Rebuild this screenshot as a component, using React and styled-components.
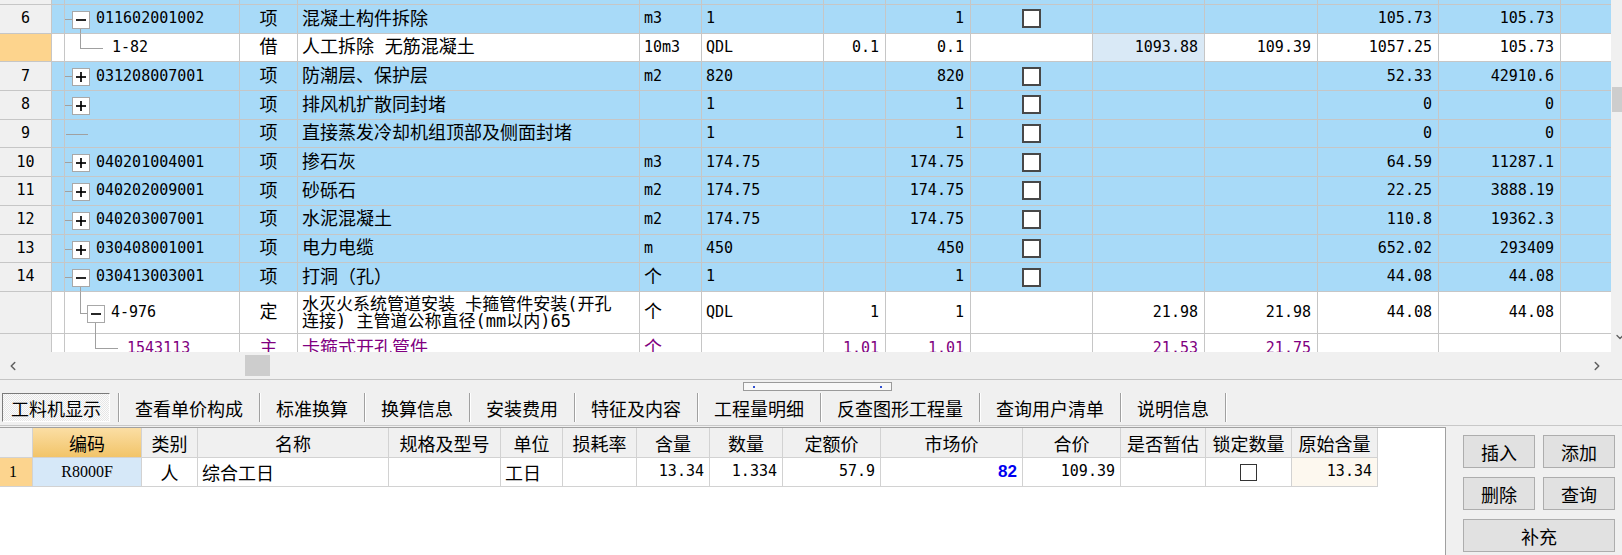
import React from "react"
import styled, { createGlobalStyle, css } from "styled-components"
import { ChevronLeft, ChevronRight, ChevronDown } from "lucide-react"

const CJK = `"DejaVu Sans Mono", "Noto Sans CJK SC", sans-serif`
const SANS = `"Noto Sans CJK SC", sans-serif`
const MONO = `"DejaVu Sans Mono", "Liberation Mono", monospace`
const LINE = "#c6c6c6"
const BLUE = "#a8daf8"

const GlobalStyle = createGlobalStyle`
  html, body {
    margin: 0;
    padding: 0;
  }
  body {
    width: 1622px;
    height: 555px;
    overflow: hidden;
    background: #f0f0f0;
    font-family: ${SANS};
    color: #000;
  }
`

const Screen = styled.div`
  width: 1622px;
  height: 555px;
  display: flex;
  flex-direction: column;
  background: #f0f0f0;
`

/* ---------- upper grid ---------- */

const GridArea = styled.div`
  display: flex;
  height: 352px;
`

const GridBody = styled.div`
  width: 1611px;
  height: 352px;
  overflow: hidden;
  background: #fff;
`

const Row = styled.div`
  display: flex;
  height: ${p => p.$h}px;
  background: ${p => (p.$white ? "#fff" : BLUE)};
  color: ${p => (p.$purple ? "#800080" : "#000")};
`

const Cell = styled.div`
  box-sizing: border-box;
  flex: 0 0 ${p => p.$w}px;
  height: 100%;
  display: flex;
  align-items: center;
  justify-content: ${p =>
    p.$align === "right" ? "flex-end" : p.$align === "center" ? "center" : "flex-start"};
  padding-left: ${p => (p.$align === "left" ? "4px" : "0")};
  padding-right: ${p => (p.$align === "right" ? "6px" : "0")};
  border-right: ${p => (p.$last ? "none" : `1px solid ${LINE}`)};
  border-bottom: 1px solid ${LINE};
  background: ${p => p.$bg || "transparent"};
  white-space: nowrap;
`

const Txt = styled.span`
  font-family: ${p => (p.$mono ? MONO : CJK)};
  font-size: ${p => (p.$mono ? "15px" : p.$tight ? "17px" : "18px")};
  line-height: ${p => (p.$tight ? "17px" : "1.15")};
`

const TreeSvg = styled.svg`
  flex: 0 0 auto;
  overflow: visible;
`

const Check = styled.span`
  display: block;
  box-sizing: border-box;
  width: ${p => (p.$small ? "17px" : "19px")};
  height: ${p => (p.$small ? "17px" : "19px")};
  border: ${p => (p.$small ? "1px solid #333" : "2px solid #484848")};
  background: #fff;
`

const VScroll = styled.div`
  width: 11px;
  height: 352px;
  overflow: hidden;
  background: #f0f0f0;
`

const VTrack = styled.div`
  width: 17px;
  height: 100%;
  box-sizing: border-box;
  padding: 87px 0 9px;
  display: flex;
  flex-direction: column;
  align-items: center;
`

const VThumb = styled.div`
  width: 15px;
  height: 25px;
  background: #cdcdcd;
`

const Spacer = styled.div`
  flex: 1;
`

const HScroll = styled.div`
  height: 28px;
  box-sizing: border-box;
  border-bottom: 1px solid #c4c4c4;
  display: flex;
  align-items: center;
  padding-right: 12px;
  background: #f0f0f0;
`

const ArrowBox = styled.div`
  width: 26px;
  height: 27px;
  display: flex;
  align-items: center;
  justify-content: center;
  color: #606060;
`

const HThumb = styled.div`
  margin-left: 219px;
  width: 25px;
  height: 21px;
  background: #cdcdcd;
`

/* ---------- splitter + tabs ---------- */

const Splitter = styled.div`
  height: 12px;
  display: flex;
  align-items: flex-start;
`

const Handle = styled.div`
  margin: 2px 0 0 743px;
  width: 149px;
  height: 9px;
  box-sizing: border-box;
  border: 1px solid #9a9a9a;
  background: #f8f8f8;
  display: flex;
  align-items: center;
  justify-content: space-between;
  padding: 0 9px;
`

const Dot = styled.span`
  width: 2px;
  height: 2px;
  background: #2f4fd0;
`

const TabBar = styled.div`
  height: 34px;
  box-sizing: border-box;
  padding-top: 1px;
  border-bottom: 1px solid #c8c8c8;
  display: flex;
  align-items: flex-start;
`

const Tab = styled.div`
  height: 29px;
  display: flex;
  align-items: center;
  padding: ${p => (p.$active ? "0 8px 0 2px" : "0 16px")};
  border-right: 1px solid #a0a0a0;
  box-shadow: 1px 0 0 #fff;
  font-family: ${SANS};
  font-size: 18px;
  white-space: nowrap;
`

const TabLabel = styled.span`
  ${p =>
    p.$active &&
    css`
      height: 29px;
      box-sizing: border-box;
      display: flex;
      align-items: center;
      padding: 0 8px;
      border: 1px solid;
      border-color: #7a7a7a #fff #fff #7a7a7a;
      background: repeating-conic-gradient(#e6e6e6 0 25%, #fcfcfc 0 50%) 0 0 / 2px 2px;
    `}
`

/* ---------- lower panel ---------- */

const Bottom = styled.div`
  margin-top: 1px;
  flex: 1;
  display: flex;
`

const DetailPanel = styled.div`
  width: 1446px;
  box-sizing: border-box;
  border-top: 1px solid #a0a0a0;
  border-right: 1px solid #a0a0a0;
  background: #fff;
`

const DRow = styled.div`
  display: flex;
  height: ${p => (p.$head ? 30 : 29)}px;
`

const DCell = styled.div`
  box-sizing: border-box;
  flex: 0 0 ${p => p.$w}px;
  display: flex;
  align-items: center;
  justify-content: ${p =>
    p.$align === "right" ? "flex-end" : p.$align === "left" ? "flex-start" : "center"};
  padding-left: ${p => (p.$align === "left" ? "4px" : "0")};
  padding-right: ${p => (p.$align === "right" ? "5px" : "0")};
  border-right: 1px solid #d2d2d2;
  border-bottom: 1px solid #d2d2d2;
  background: ${p => p.$bg || "transparent"};
  font-family: ${SANS};
  font-size: 18px;
  white-space: nowrap;
`

const SerifTxt = styled.span`
  font-family: "Liberation Serif", serif;
  font-size: 16px;
  padding-left: ${p => (p.$indent ? "5px" : "0")};
`

const Market = styled.span`
  font-family: "Liberation Sans", sans-serif;
  font-weight: bold;
  font-size: 17px;
  color: #0000f0;
`

const ActionPanel = styled.div`
  flex: 1;
  display: grid;
  grid-template-columns: 72px 72px;
  grid-auto-rows: 33px;
  column-gap: 8px;
  row-gap: 9px;
  align-content: start;
  padding: 8px 0 0 17px;
`

const Button = styled.button`
  grid-column: ${p => (p.$wide ? "span 2" : "auto")};
  margin: 0;
  padding: 0;
  border: 1px solid #adadad;
  background: #e1e1e1;
  font-family: ${SANS};
  font-size: 18px;
  color: #000;
`

/* ---------- data ---------- */

const rows = [
  { h: 5 },
  { num: "6", tree: { level: 0, box: "-", down: true }, code: "011602001002", type: "项", name: "混凝土构件拆除", unit: "m3", expr: "1", q2: "1", check: true, c: "105.73", d: "105.73" },
  { white: true, sel: true, tree: { level: 1, up: true }, code: "1-82", type: "借", name: "人工拆除 无筋混凝土", unit: "10m3", expr: "QDL", q1: "0.1", q2: "0.1", a: "1093.88", aHi: true, b: "109.39", c: "1057.25", d: "105.73" },
  { num: "7", tree: { level: 0, box: "+" }, code: "031208007001", type: "项", name: "防潮层、保护层", unit: "m2", expr: "820", q2: "820", check: true, c: "52.33", d: "42910.6" },
  { num: "8", tree: { level: 0, box: "+" }, type: "项", name: "排风机扩散同封堵", expr: "1", q2: "1", check: true, c: "0", d: "0" },
  { num: "9", tree: { level: 0 }, type: "项", name: "直接蒸发冷却机组顶部及侧面封堵", expr: "1", q2: "1", check: true, c: "0", d: "0" },
  { num: "10", tree: { level: 0, box: "+" }, code: "040201004001", type: "项", name: "掺石灰", unit: "m3", expr: "174.75", q2: "174.75", check: true, c: "64.59", d: "11287.1" },
  { num: "11", tree: { level: 0, box: "+" }, code: "040202009001", type: "项", name: "砂砾石", unit: "m2", expr: "174.75", q2: "174.75", check: true, c: "22.25", d: "3888.19" },
  { num: "12", tree: { level: 0, box: "+" }, code: "040203007001", type: "项", name: "水泥混凝土", unit: "m2", expr: "174.75", q2: "174.75", check: true, c: "110.8", d: "19362.3" },
  { num: "13", tree: { level: 0, box: "+" }, code: "030408001001", type: "项", name: "电力电缆", unit: "m", expr: "450", q2: "450", check: true, c: "652.02", d: "293409" },
  { num: "14", tree: { level: 0, box: "-", down: true }, code: "030413003001", type: "项", name: "打洞（孔）", unit: "个", expr: "1", q2: "1", check: true, c: "44.08", d: "44.08" },
  { h: 42.6, white: true, tree: { level: 1, box: "-", up: true, down: true }, code: "4-976", type: "定", name: ["水灭火系统管道安装 卡箍管件安装(开孔", "连接) 主管道公称直径(mm以内)65"], unit: "个", expr: "QDL", q1: "1", q2: "1", a: "21.98", b: "21.98", c: "44.08", d: "44.08" },
  { white: true, purple: true, tree: { level: 2, up: true }, code: "1543113", type: "主", name: "卡箍式开孔管件", unit: "个", q1: "1.01", q2: "1.01", a: "21.53", b: "21.75" }
]

const tabs = ["工料机显示", "查看单价构成", "标准换算", "换算信息", "安装费用", "特征及内容", "工程量明细", "反查图形工程量", "查询用户清单", "说明信息"]

const detailCols = [
  { w: 33, label: "" },
  { w: 109, label: "编码", hot: true },
  { w: 56, label: "类别" },
  { w: 191, label: "名称" },
  { w: 112, label: "规格及型号" },
  { w: 62, label: "单位" },
  { w: 74, label: "损耗率" },
  { w: 73, label: "含量" },
  { w: 73, label: "数量" },
  { w: 98, label: "定额价" },
  { w: 142, label: "市场价" },
  { w: 98, label: "合价" },
  { w: 85, label: "是否暂估" },
  { w: 86, label: "锁定数量" },
  { w: 86, label: "原始含量" }
]

const isAscii = s => /^[\x00-\x7f]*$/.test(s)

function Value({ text }) {
  if (!text) return null
  return <Txt $mono={isAscii(text)}>{text}</Txt>
}

function TreeGlyph({ level = 0, box, up, down, h }) {
  const ch = h - 1
  const mid = Math.round(ch / 2)
  const px = 15 * level
  const bx = 7 + 15 * level
  const width = box ? bx + 24 : px + 32
  const y = mid + 0.5
  const stroke = "#a0a0a0"
  return (
    <TreeSvg width={width} height={ch}>
      {up && <line x1={px + 0.5} y1={0} x2={px + 0.5} y2={y} stroke={stroke} />}
      {box ? (
        <>
          <line x1={level ? px : 0} y1={y} x2={bx} y2={y} stroke={stroke} />
          <rect x={bx + 0.5} y={mid - 8 + 0.5} width={17} height={17} fill="#fff" stroke="#a8a8a8" />
          <line x1={bx + 4} y1={y + 0.5} x2={bx + 14} y2={y + 0.5} stroke="#000" strokeWidth="1.7" />
          {box === "+" && <line x1={bx + 9} y1={mid - 4} x2={bx + 9} y2={mid + 6} stroke="#000" strokeWidth="1.7" />}
          {down && <line x1={bx + 8.5} y1={mid + 10} x2={bx + 8.5} y2={h} stroke={stroke} />}
        </>
      ) : (
        <line x1={level ? px : 1} y1={y} x2={px + 23} y2={y} stroke={stroke} />
      )}
    </TreeSvg>
  )
}

function GridRow({ r }) {
  const h = r.h || 28.7
  const names = Array.isArray(r.name) ? r.name : null
  return (
    <Row $h={h} $white={r.white} $purple={r.purple}>
      <Cell $w={52} $align="center" $bg={r.sel ? "#fdd48d" : "#f0f0f0"}>
        {r.num && <Txt $mono>{r.num}</Txt>}
      </Cell>
      <Cell $w={13} />
      <Cell $w={175}>
        {r.tree && <TreeGlyph {...r.tree} h={h} />}
        {r.code && <Txt $mono>{r.code}</Txt>}
      </Cell>
      <Cell $w={58} $align="center"><Value text={r.type} /></Cell>
      <Cell $w={342} $align="left">
        {names ? (
          <Txt $tight>{names[0]}<br />{names[1]}</Txt>
        ) : (
          r.name && <Txt>{r.name}</Txt>
        )}
      </Cell>
      <Cell $w={62} $align="left"><Value text={r.unit} /></Cell>
      <Cell $w={122} $align="left"><Value text={r.expr} /></Cell>
      <Cell $w={62} $align="right"><Value text={r.q1} /></Cell>
      <Cell $w={85} $align="right"><Value text={r.q2} /></Cell>
      <Cell $w={122} $align="center">{r.check && <Check />}</Cell>
      <Cell $w={112} $align="right" $bg={r.aHi ? "#d9e9f6" : null}><Value text={r.a} /></Cell>
      <Cell $w={113} $align="right"><Value text={r.b} /></Cell>
      <Cell $w={121} $align="right"><Value text={r.c} /></Cell>
      <Cell $w={122} $align="right"><Value text={r.d} /></Cell>
      <Cell $w={50} $last />
    </Row>
  )
}

function DetailGrid() {
  const w = i => detailCols[i].w
  return (
    <DetailPanel>
      <DRow $head>
        {detailCols.map((c, i) => (
          <DCell
            key={i}
            $w={c.w}
            $bg={c.hot ? "linear-gradient(#fbdea4, #f2c469)" : "#f0f0f0"}
          >
            {c.label}
          </DCell>
        ))}
      </DRow>
      <DRow>
        <DCell $w={w(0)} $align="left" $bg="#fcd48e"><SerifTxt $indent>1</SerifTxt></DCell>
        <DCell $w={w(1)} $bg="#d6e8f8"><SerifTxt>R8000F</SerifTxt></DCell>
        <DCell $w={w(2)}>人</DCell>
        <DCell $w={w(3)} $align="left">综合工日</DCell>
        <DCell $w={w(4)} />
        <DCell $w={w(5)} $align="left">工日</DCell>
        <DCell $w={w(6)} />
        <DCell $w={w(7)} $align="right"><Txt $mono>13.34</Txt></DCell>
        <DCell $w={w(8)} $align="right"><Txt $mono>1.334</Txt></DCell>
        <DCell $w={w(9)} $align="right"><Txt $mono>57.9</Txt></DCell>
        <DCell $w={w(10)} $align="right"><Market>82</Market></DCell>
        <DCell $w={w(11)} $align="right"><Txt $mono>109.39</Txt></DCell>
        <DCell $w={w(12)} />
        <DCell $w={w(13)}><Check $small /></DCell>
        <DCell $w={w(14)} $align="right" $bg="#fdf8ef"><Txt $mono>13.34</Txt></DCell>
      </DRow>
    </DetailPanel>
  )
}

export default function App() {
  return (
    <Screen>
      <GlobalStyle />
      <GridArea>
        <GridBody>
          {rows.map((r, i) => (
            <GridRow key={i} r={r} />
          ))}
        </GridBody>
        <VScroll>
          <VTrack>
            <VThumb />
            <Spacer />
            <ChevronDown size={12} strokeWidth={2.6} color="#606060" />
          </VTrack>
        </VScroll>
      </GridArea>
      <HScroll>
        <ArrowBox><ChevronLeft size={14} strokeWidth={2.6} /></ArrowBox>
        <HThumb />
        <Spacer />
        <ArrowBox><ChevronRight size={14} strokeWidth={2.6} /></ArrowBox>
      </HScroll>
      <Splitter>
        <Handle>
          <Dot />
          <Dot />
        </Handle>
      </Splitter>
      <TabBar>
        {tabs.map((t, i) => (
          <Tab key={t} $active={i === 0}>
            <TabLabel $active={i === 0}>{t}</TabLabel>
          </Tab>
        ))}
      </TabBar>
      <Bottom>
        <DetailGrid />
        <ActionPanel>
          <Button>插入</Button>
          <Button>添加</Button>
          <Button>删除</Button>
          <Button>查询</Button>
          <Button $wide>补充</Button>
        </ActionPanel>
      </Bottom>
    </Screen>
  )
}
